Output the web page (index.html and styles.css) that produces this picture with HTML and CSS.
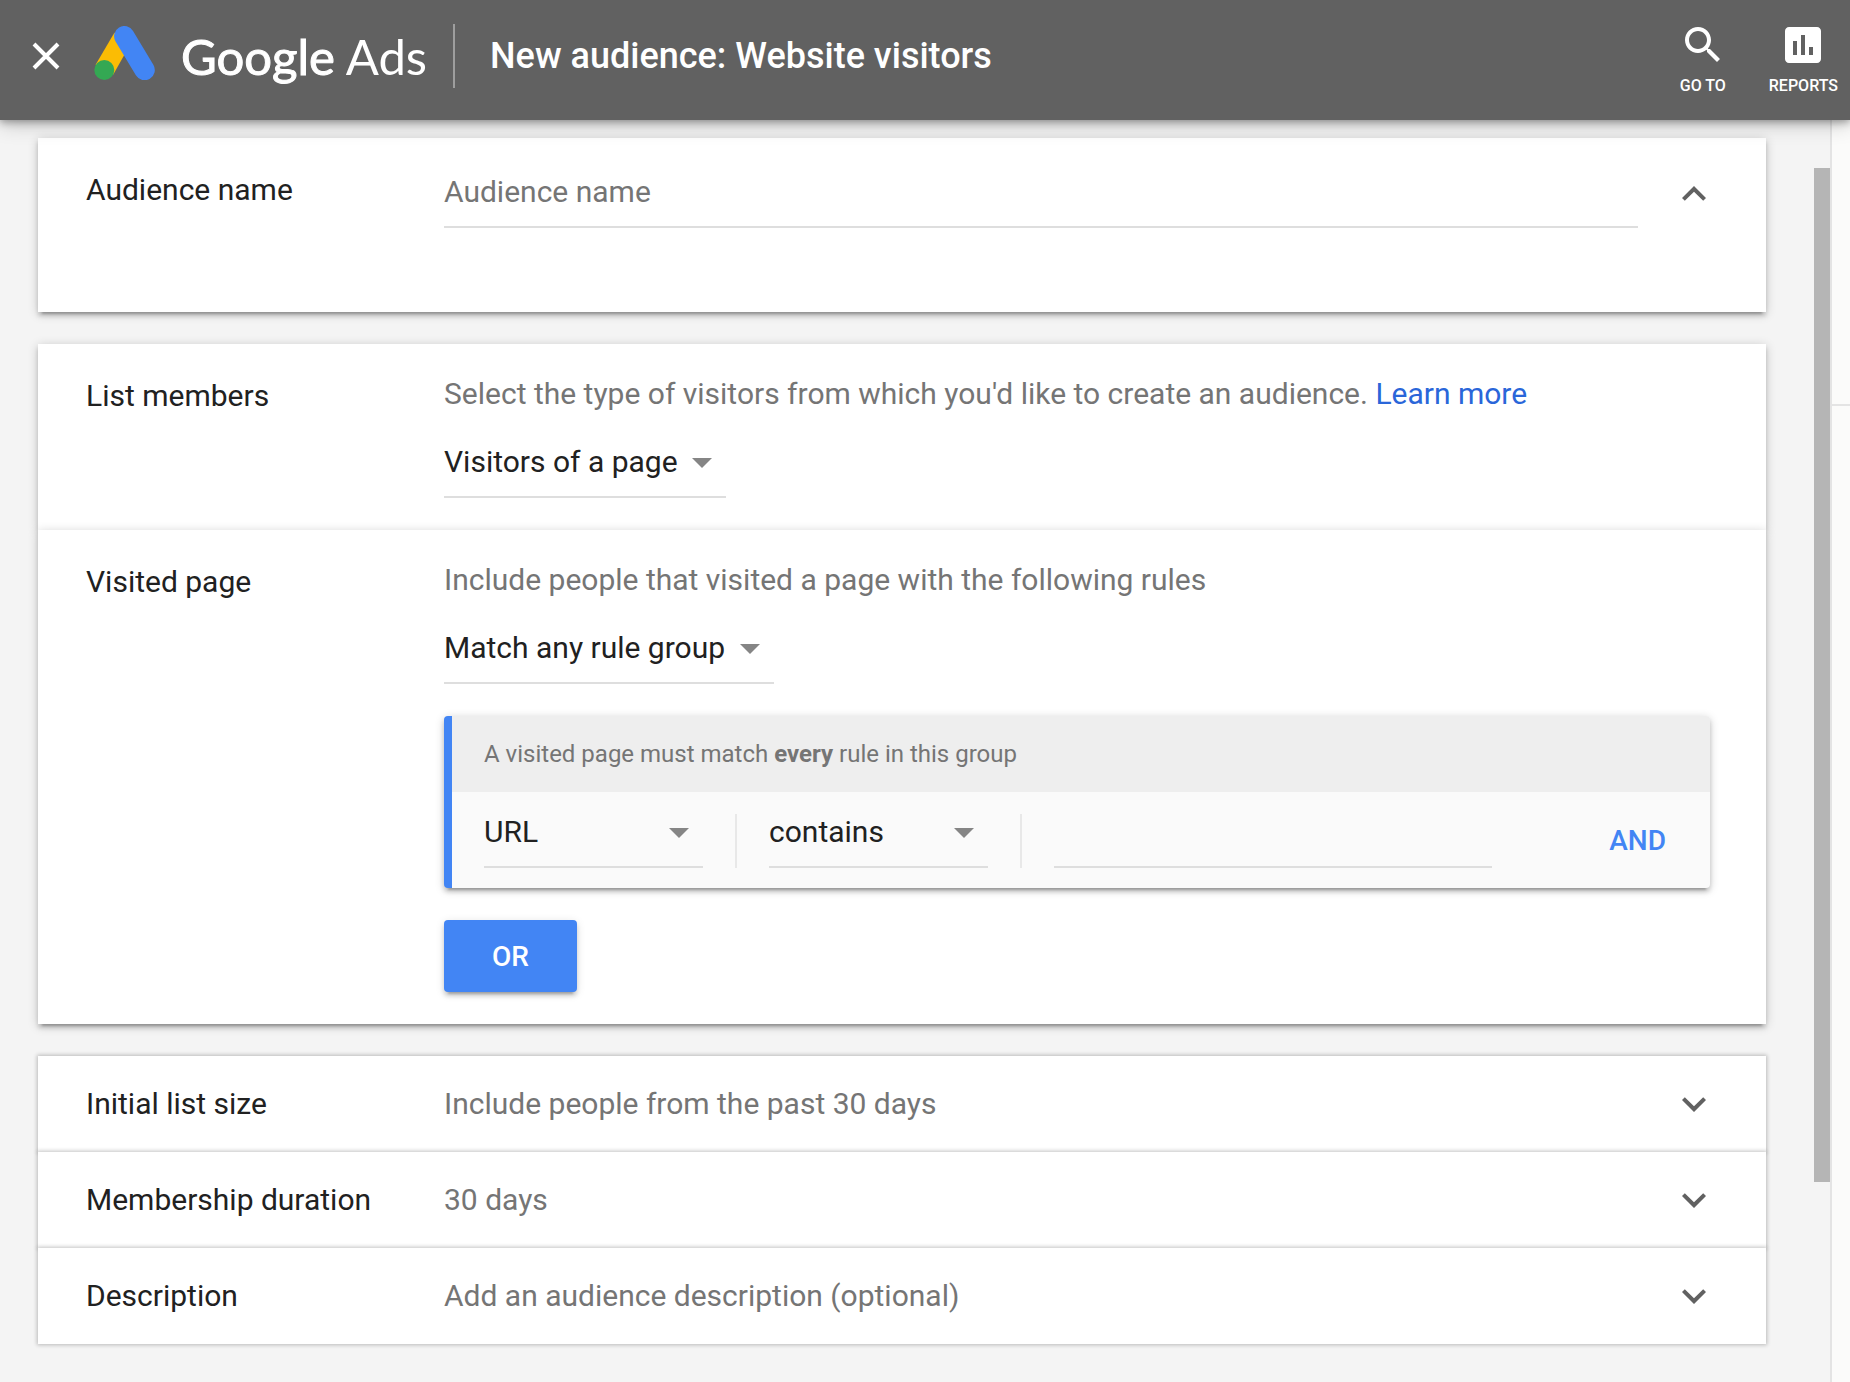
FILE: index.html
```html
<!DOCTYPE html>
<html lang="en">
<head>
<meta charset="utf-8">
<meta name="viewport" content="width=device-width, initial-scale=1">
<title>New audience: Website visitors</title>
<link rel="stylesheet" href="styles.css">
</head>
<body>
<header class="topbar">
  <button class="close" type="button" aria-label="Close">
    <svg width="28" height="28" viewBox="0 0 28 28" aria-hidden="true"><path d="M2 2l24 24M26 2L2 26" fill="none" stroke="#fff" stroke-width="4"/></svg>
  </button>
  <a class="brand" href="#">
    <svg class="brand-mark" width="61" height="54" viewBox="0 0 61 54" aria-hidden="true">
      <path d="M1.600 38.800L20.500 6.500L30.500 28.500L19.300 48.500Z" fill="#fbbc04"/>
      <path d="M30.300 10.200L50.600 44" stroke="#4285f4" stroke-width="20.400" stroke-linecap="round"/>
      <circle cx="10.300" cy="44" r="10" fill="#34a853"/>
    </svg>
    <span class="brand-name"><b>Google</b> Ads</span>
  </a>
  <h1 class="title">New audience: Website visitors</h1>
  <nav class="tools">
    <button class="tool" type="button">
      <svg width="48" height="48" viewBox="0 0 24 24" fill="#fff" aria-hidden="true"><path d="M15.500 14h-.79l-.28-.27C15.410 12.590 16 11.110 16 9.500 16 5.910 13.090 3 9.500 3S3 5.910 3 9.500 5.910 16 9.500 16c1.610 0 3.090-.59 4.230-1.570l.27.28v.79l5 4.990L20.490 19l-4.990-5zm-6 0C7.010 14 5 11.990 5 9.500S7.010 5 9.500 5 14 7.010 14 9.500 11.990 14 9.500 14z"/></svg>
      GO TO
    </button>
    <button class="tool" type="button">
      <svg width="48" height="48" viewBox="0 0 24 24" fill="#fff" aria-hidden="true"><path d="M19 3H5c-1.100 0-2 .9-2 2v14c0 1.100.9 2 2 2h14c1.100 0 2-.9 2-2V5c0-1.100-.9-2-2-2zM9 17H7v-7h2v7zm4 0h-2V7h2v10zm4 0h-2v-4h2v4z"/></svg>
      REPORTS
    </button>
  </nav>
</header>
<div class="page">
  <main class="content">
    <form class="cards">
      <section class="card">
        <div class="section section-name">
          <label class="label" for="audience-name">Audience name</label>
          <div class="field"><input class="text-input" id="audience-name" type="text" placeholder="Audience name"></div>
          <button class="toggle" type="button" aria-label="Collapse audience name">
            <svg width="48" height="48" viewBox="0 0 24 24" fill="#616161" aria-hidden="true"><path d="M12 8l-6 6 1.410 1.410L12 10.830l4.590 4.580L18 14z"/></svg>
          </button>
        </div>
      </section>

      <section class="card">
        <div class="section">
          <label class="label" for="members">List members</label>
          <div class="body">
            <p class="hint">Select the type of visitors from which you'd like to create an audience. <a href="#">Learn more</a></p>
            <div class="select"><select id="members"><option>Visitors of a page</option></select></div>
          </div>
        </div>
        <div class="section">
          <label class="label" for="match">Visited page</label>
          <div class="body">
            <p class="hint">Include people that visited a page with the following rules</p>
            <div class="select"><select id="match"><option>Match any rule group</option></select></div>
            <div class="group">
              <p class="group-head">A visited page must match <strong>every</strong> rule in this group</p>
              <div class="rule">
                <div class="select select-fixed"><select aria-label="Rule field"><option>URL</option></select></div>
                <span class="rule-divider"></span>
                <div class="select select-fixed"><select aria-label="Rule condition"><option>contains</option></select></div>
                <span class="rule-divider"></span>
                <input class="text-input rule-value" type="text" aria-label="Rule value">
                <button class="and" type="button">AND</button>
              </div>
            </div>
            <button class="or" type="button">OR</button>
          </div>
        </div>
      </section>

      <section class="card">
        <div class="row">
          <h2 class="row-label">Initial list size</h2>
          <p class="row-value">Include people from the past 30 days</p>
          <button class="toggle" type="button" aria-label="Expand initial list size">
            <svg width="48" height="48" viewBox="0 0 24 24" fill="#616161" aria-hidden="true"><path d="M16.590 8.590L12 13.170 7.410 8.590 6 10l6 6 6-6z"/></svg>
          </button>
        </div>
        <div class="row">
          <h2 class="row-label">Membership duration</h2>
          <p class="row-value">30 days</p>
          <button class="toggle" type="button" aria-label="Expand membership duration">
            <svg width="48" height="48" viewBox="0 0 24 24" fill="#616161" aria-hidden="true"><path d="M16.590 8.590L12 13.170 7.410 8.590 6 10l6 6 6-6z"/></svg>
          </button>
        </div>
        <div class="row">
          <h2 class="row-label">Description</h2>
          <p class="row-value">Add an audience description (optional)</p>
          <button class="toggle" type="button" aria-label="Expand description">
            <svg width="48" height="48" viewBox="0 0 24 24" fill="#616161" aria-hidden="true"><path d="M16.590 8.590L12 13.170 7.410 8.590 6 10l6 6 6-6z"/></svg>
          </button>
        </div>
      </section>
    </form>
  </main>
  <div class="track"><div class="thumb"></div></div>
  <aside class="side"><div class="side-head"></div></aside>
</div>
</body>
</html>
```

FILE: styles.css
```css
* { box-sizing: border-box; }

body {
  margin: 0;
  min-height: 100vh;
  display: flex;
  flex-direction: column;
  background: #f4f4f4;
  color: #212121;
  font: 400 30px/36px Roboto, "Liberation Sans", sans-serif;
}

h1, h2, p { margin: 0; font: inherit; }

button, input, select {
  margin: 0;
  padding: 0;
  border: 0;
  border-radius: 0;
  background: none;
  color: inherit;
  font: inherit;
  outline: none;
}

button { cursor: pointer; }
svg { display: block; }
a { color: #2a66d9; text-decoration: none; }

/* Top bar */
.topbar {
  position: relative;
  z-index: 1;
  display: flex;
  align-items: center;
  height: 120px;
  padding: 0 12px 8px 32px;
  background: #616161;
  color: #fff;
  box-shadow: 0 2px 8px rgba(0, 0, 0, .35), 0 4px 20px rgba(0, 0, 0, .2);
}

.brand {
  display: flex;
  align-items: center;
  gap: 26px;
  margin-left: 34px;
  color: #fff;
}

.brand-mark { margin-bottom: 6px; }
.brand-name { font: 400 49px/60px Lato, sans-serif; white-space: nowrap; }
.brand-name b { font-weight: 400; -webkit-text-stroke: 1px #fff; }

.title {
  margin-left: 26px;
  padding-left: 35px;
  border-left: 2px solid #9e9e9e;
  font-size: 36px;
  font-weight: 500;
  line-height: 64px;
  white-space: nowrap;
}

.tools { display: flex; gap: 42px; margin-left: auto; padding-top: 4px; }

.tool {
  display: flex;
  flex-direction: column;
  align-items: center;
  gap: 7px;
  font-size: 16px;
  font-weight: 500;
  line-height: 20px;
}

/* Page frame */
.page { flex: 1; display: flex; }
.content { flex: 1; min-width: 0; padding: 18px 48px 38px 38px; }
.track { width: 16px; padding: 48px 0 200px; display: flex; }
.thumb { flex: 1; background: #b5b5b5; }
.side { width: 20px; border-left: 2px solid #e4e4e4; background: #fbfbfa; }
.side-head { height: 286px; border-bottom: 2px solid #e4e4e4; }

/* Cards */
.cards { display: flex; flex-direction: column; gap: 32px; }

.section {
  display: flex;
  padding: 32px 56px 32px 48px;
  background: #fff;
  box-shadow: 0 6px 2px -4px rgba(0, 0, 0, .2), 0 4px 4px rgba(0, 0, 0, .14), 0 2px 10px rgba(0, 0, 0, .2);
}

.label { flex: 0 0 358px; padding-top: 2px; }
.body { flex: 1; min-width: 0; }
.hint { color: #757575; }

.section-name { padding-right: 48px; padding-bottom: 84px; }
.section-name .field { flex: 1; padding-top: 4px; }

.text-input {
  display: block;
  width: 100%;
  height: 54px;
  padding-bottom: 18px;
  border-bottom: 2px solid #dedede;
}

.text-input::placeholder { color: #757575; opacity: 1; }

.toggle { margin-left: 32px; height: 48px; }

.select {
  display: grid;
  width: fit-content;
  height: 54px;
  margin-top: 32px;
  border-bottom: 2px solid #dedede;
}

.select select {
  grid-area: 1 / 1;
  appearance: none;
  height: 52px;
  padding: 0 48px 16px 0;
}

.select::after {
  content: "";
  grid-area: 1 / 1;
  justify-self: end;
  width: 20px;
  height: 10px;
  margin: 14px 14px 0 0;
  background: #858585;
  clip-path: polygon(0 0, 100% 0, 50% 100%);
  pointer-events: none;
}

.group {
  margin-top: 32px;
  border-left: 8px solid #4285f4;
  border-radius: 4px;
  background: #fafafa;
  box-shadow: 0 6px 2px -4px rgba(0, 0, 0, .2), 0 4px 4px rgba(0, 0, 0, .14), 0 2px 10px rgba(0, 0, 0, .2);
}

.group-head {
  padding: 20px 32px;
  border-radius: 0 4px 0 0;
  background: #eee;
  color: #757575;
  font-size: 24px;
}

.rule {
  display: flex;
  gap: 32px;
  padding: 22px 44px 20px 32px;
}

.select-fixed { flex: 0 0 219px; margin-top: 0; }
.rule-divider { width: 2px; background: #e8e8e8; }
.rule-value { flex: 0 1 438px; min-width: 0; }

.and, .or { font-size: 28px; font-weight: 500; }
.and { margin-left: auto; color: #4285f4; }

.or {
  display: block;
  height: 72px;
  margin-top: 32px;
  padding: 2px 48px 0;
  border-radius: 4px;
  background: #4285f4;
  color: #fff;
  box-shadow: 0 6px 2px -4px rgba(0, 0, 0, .2), 0 4px 4px rgba(0, 0, 0, .14), 0 2px 10px rgba(0, 0, 0, .12);
}

/* Collapsed rows */
.row {
  display: flex;
  align-items: center;
  padding: 24px 48px;
  background: #fff;
  box-shadow: 0 0 4px 1px rgba(0, 0, 0, .24);
}

.row-label { flex: 0 0 358px; }
.row-value { flex: 1; color: #757575; }
```
